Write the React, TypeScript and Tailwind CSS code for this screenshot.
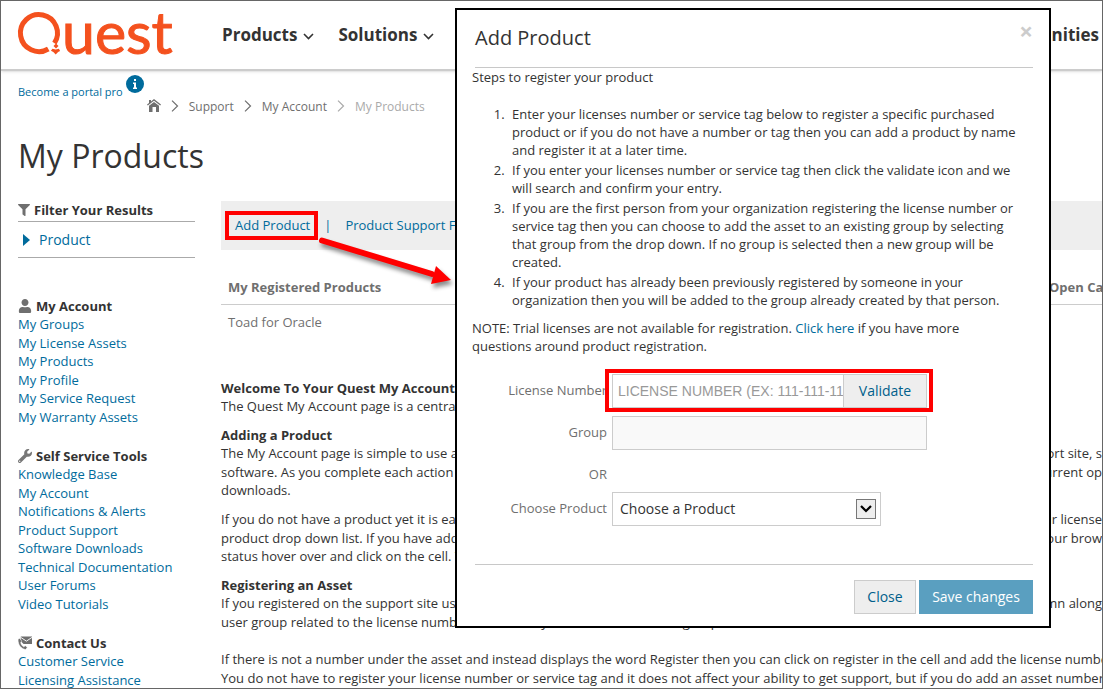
import React from 'react';
import { FaFilter, FaUser, FaWrench } from 'react-icons/fa';

const accountLinks = [
  'My Groups',
  'My License Assets',
  'My Products',
  'My Profile',
  'My Service Request',
  'My Warranty Assets',
];

const toolLinks = [
  'Knowledge Base',
  'My Account',
  'Notifications & Alerts',
  'Product Support',
  'Software Downloads',
  'Technical Documentation',
  'User Forums',
  'Video Tutorials',
];

const contactLinks = ['Customer Service', 'Licensing Assistance'];

const QuestLogo: React.FC = () => (
  <svg viewBox="0 0 158 46" className="w-[158px] h-[46px] shrink-0 overflow-visible" role="img" aria-label="Quest">
    <path d="M36.4 31.200A18.500 18.500 0 1 0 30.300 37" fill="none" stroke="#f4511e" strokeWidth="5" />
    <path d="M38 31.500l2.500 2.500L38 36.500l-2.500-2.500z" fill="#f4511e" />
    <path d="M34.500 36.800l3.200.8 3.200-.8 1.200 2.200-2 1-2.400 2.400-2.400-2.400-2.400-1.200z" fill="#f4511e" />
    <text x="44" y="42" fontFamily="Lato, sans-serif" fontSize="59" fill="#f4511e" stroke="#f4511e" strokeWidth="1">
      uest
    </text>
  </svg>
);

const HomeIcon: React.FC = () => (
  <svg viewBox="0 0 14 13" className="w-3.5 h-[13px]" fill="#6f6f6f">
    <path d="M7 0L14 5.600l-.8 1L7 1.800.8 6.600 0 5.600l2-1.600V1h2v1.400z" />
    <path d="M2 6.800l5-3.900 5 3.900V13H9V8H5.500v5H2z" />
  </svg>
);

const ContactIcon: React.FC = () => (
  <svg viewBox="0 0 15 14" className="w-3.5 h-3.5">
    <path d="M3 0h12v8H6L3 5z" fill="#6f6f6f" />
    <path d="M3 1l6 4 6-4" fill="none" stroke="#fff" />
    <path d="M0 3c0 6 3 10 8 11l2-2-2-2-2 1C4 10 3 8 3 6l1-1-2-3z" fill="#6f6f6f" stroke="#fff" strokeWidth=".6" />
  </svg>
);

const Caret: React.FC = () => (
  <svg viewBox="0 0 11 7" className="w-[11px] h-[7px] mt-0.5" fill="none" stroke="#333" strokeWidth="1.6">
    <path d="M1 1l4.500 4.500L10 1" />
  </svg>
);

const CrumbArrow: React.FC = () => (
  <svg viewBox="0 0 8 12" className="w-2 h-3 -mt-0.5" fill="none" stroke="currentColor" strokeWidth="1.2">
    <path d="M1 .6L6.500 6 1 11.400" />
  </svg>
);

const NavItem: React.FC<{ label: string }> = ({ label }) => (
  <a href="#" className="flex items-center gap-1.5 text-[17px] font-bold text-[#333]">
    {label}
    <Caret />
  </a>
);

const SideSection: React.FC<{ title: string; icon: React.ReactNode; links: string[] }> = ({ title, icon, links }) => (
  <section>
    <h2 className="flex items-center gap-1 text-[13px] leading-[18px] font-bold text-[#333]">
      {icon}
      {title}
    </h2>
    <ul>
      {links.map((link) => (
        <li key={link} className="odd:pb-px text-[13px] leading-[18px]">
          <a href="#" className="block text-[#006b9c]">{link}</a>
        </li>
      ))}
    </ul>
  </section>
);

const Line: React.FC<{ end?: string; children: React.ReactNode }> = ({ end, children }) => (
  <span className="flex justify-between odd:pb-px whitespace-nowrap">
    <span>{children}</span>
    {end && <span>{end}</span>}
  </span>
);

const ProductModal: React.FC = () => (
  <div
    role="dialog"
    aria-label="Add Product"
    className="absolute left-[454px] top-[7px] w-[596px] border-2 border-black bg-white pl-[15px] pr-4 pb-3 text-[13px] leading-[18px] text-[#333]"
  >
    <div className="flex justify-between h-[58px] ml-[3px] pt-3 border-b border-[#c8c8c8]">
      <h2 className="text-[20px] leading-[32px]">Add Product</h2>
      <button aria-label="Close dialog" className="self-start text-[24px] leading-[18px] font-bold text-[#ccc]">×</button>
    </div>
    <p>Steps to register your product</p>
    <ol className="list-decimal pl-9 pr-3 pt-[19px] flex flex-col gap-0.5">
      <li className="pl-1">
        Enter your licenses number or service tag below to register a specific purchased product or if you do not have a
        number or tag then you can add a product by name and register it at a later time.
      </li>
      <li className="pl-1">
        If you enter your licenses number or service tag then click the validate icon and we will search and confirm your
        entry.
      </li>
      <li className="pl-1">
        If you are the first person from your organization registering the license number or service tag then you can
        choose to add the asset to an existing group by selecting that group from the drop down. If no group is selected
        then a new group will be created.
      </li>
      <li className="pl-1">
        If your product has already been previously registered by someone in your organization then you will be added to
        the group already created by that person.
      </li>
    </ol>
    <p className="pt-2.5 pr-12">
      NOTE: Trial licenses are not available for registration.{' '}
      <a href="#" className="text-[#006b9c]">Click here</a> if you have more questions around product registration.
    </p>

    <form className="pt-[19px] grid grid-cols-[135px_315px] gap-x-[5px] gap-y-2 items-center text-[#6f6f6f]">
      <label htmlFor="license" className="pb-0.5 text-right">License Number</label>
      <div className="relative flex h-[34px]">
        <input
          id="license"
          placeholder="LICENSE NUMBER (EX: 111-111-111)"
          className="w-[231px] border border-r-0 border-[#ccc] pl-[5px] font-['Liberation_Sans',sans-serif] text-[14px] placeholder:text-[#999]"
        />
        <button type="button" className="flex-1 border border-[#ccc] bg-[#eee] text-[14px] text-[#005f8b]">
          Validate
        </button>
        <span className="absolute -left-[7px] -right-1.5 -top-[5px] -bottom-1 border-4 border-[#f00] pointer-events-none" />
      </div>
      <label htmlFor="group" className="pb-0.5 text-right">Group</label>
      <input id="group" className="h-[34px] border border-[#ccc] bg-[#f9f9f9] px-2" />
      <span className="text-right h-[26px] pt-[7px]">OR</span>
      <span />
      <label htmlFor="product" className="pb-0.5 text-right">Choose Product</label>
      <div className="relative w-[269px] h-[34px]">
        <select id="product" className="appearance-none w-full h-full border border-[#ccc] bg-white px-[7px] text-[14px] text-[#333]">
          <option>Choose a Product</option>
        </select>
        <span className="absolute right-[5px] top-[7px] w-5 h-5 flex items-center justify-center border border-[#777] bg-[#eee] pointer-events-none">
          <svg viewBox="0 0 12 8" className="w-3 h-2" fill="none" stroke="#000" strokeWidth="2.2">
            <path d="M1 1l5 5 5-5" />
          </svg>
        </span>
      </div>
    </form>

    <div className="mt-[38px] ml-[3px] pt-[15px] border-t border-[#c8c8c8] flex justify-end gap-[3px] text-[14px]">
      <button className="h-[34px] w-[62px] border border-[#ccc] bg-[#eee] text-[#005f8b]">Close</button>
      <button className="h-[34px] w-[114px] bg-[#5a9fc0] text-white">Save changes</button>
    </div>
  </div>
);

export default function App() {
  return (
    <div className="relative h-screen overflow-hidden border border-[#666] bg-white font-['Open_Sans','Noto_Sans',sans-serif] text-[#333]">
      <header className="flex items-center h-[70px] pl-[17px] pr-[3px] border-b-2 border-[#ccc] shadow-sm">
        <QuestLogo />
        <nav className="flex-1 flex items-center gap-6 pl-[46px]">
          <NavItem label="Products" />
          <NavItem label="Solutions" />
          <a href="#" className="ml-auto text-[17px] font-bold">Communities</a>
        </nav>
      </header>

      <div className="flex pl-[17px] pt-1">
        <a href="#" className="pt-2 text-[11px] leading-[18px] text-[#006b9c]">Become a portal pro</a>
        <span className="ml-[3px] w-[18px] h-[18px] rounded-full bg-[#006b9c] flex items-center justify-center">
          <svg viewBox="0 0 6 10" className="w-1.5 h-2.5" fill="#fff">
            <path d="M2 0h2v2H2zM1 3.500h3V8.500h1V10H1V8.500h1V5H1z" />
          </svg>
        </span>
        <nav className="pt-[23px] ml-[3px] flex items-center gap-2.5 text-[12px] leading-[18px] text-[#6f6f6f]">
          <a href="#" aria-label="Home" className="-mt-1"><HomeIcon /></a>
          <CrumbArrow />
          <a href="#">Support</a>
          <CrumbArrow />
          <a href="#">My Account</a>
          <span className="flex items-center gap-2.5 text-[#aaa]">
            <CrumbArrow />
            My Products
          </span>
        </nav>
      </div>

      <h1 className="pl-[17px] pt-5 text-[32px] leading-[40px]">My Products</h1>

      <div className="flex gap-[26px] pl-[17px] pt-[25px]">
        <aside className="w-[177px] shrink-0">
          <h2 className="flex items-center gap-1 border-b border-[#aaa] pb-0.5 text-[13px] leading-[18px] font-bold">
            <FaFilter className="w-3 h-3 text-[#6f6f6f]" />
            Filter Your Results
          </h2>
          <a href="#" className="flex items-center gap-2 h-9 pl-[5px] border-b border-[#aaa] text-[14px] text-[#006b9c]">
            <svg viewBox="0 0 8 12" className="w-2 h-3" fill="#006b9c">
              <path d="M0 0l7 6-7 6z" />
            </svg>
            Product
          </a>
          <div className="pt-[39px] flex flex-col gap-[21px]">
            <SideSection title="My Account" icon={<FaUser className="w-3.5 h-3.5 text-[#6f6f6f]" />} links={accountLinks} />
            <SideSection title="Self Service Tools" icon={<FaWrench className="w-3.5 h-3.5 text-[#777]" />} links={toolLinks} />
            <SideSection title="Contact Us" icon={<ContactIcon />} links={contactLinks} />
          </div>
        </aside>

        <main className="flex-1 min-w-0 text-[13px] leading-[18px]">
          <div className="flex items-center gap-3.5 h-[49px] pb-0.5 pl-3.5 bg-[#eee] text-[#006b9c]">
            <div className="relative">
              <a href="#">Add Product</a>
              <span className="absolute -left-2.5 -right-2 -top-[5px] -bottom-1.5 border-4 border-[#f00] pointer-events-none" />
              {/* arrow leading from the link to the dialog */}
              <svg
                viewBox="0 0 140 55"
                className="absolute left-[79px] top-[18px] w-[140px] h-[55px] pointer-events-none drop-shadow-[2px_4px_2px_rgba(0,0,0,0.45)]"
              >
                <path d="M8 6.500L118 40" stroke="#f00" strokeWidth="6" strokeLinecap="round" />
                <path d="M122 32l15 14-20 4z" fill="#f00" />
              </svg>
            </div>
            <span>|</span>
            <a href="#">Product Support FAQ</a>
          </div>

          <table className="w-full table-fixed mt-7 text-left text-[#6f6f6f]">
            <thead>
              <tr className="border-b border-[#ccc]">
                <th className="pl-[7px] pb-2 font-bold">My Registered Products</th>
                <th className="w-[53px] pb-2 font-bold whitespace-nowrap">Open Cases</th>
              </tr>
            </thead>
            <tbody>
              <tr>
                <td className="pl-[7px] pt-2">Toad for Oracle</td>
                <td />
              </tr>
            </tbody>
          </table>

          <div className="pt-12 flex flex-col gap-2.5">
            <section>
              <h3 className="font-bold">Welcome To Your Quest My Account</h3>
              <p><Line>The Quest My Account page is a central place for all of your products.</Line></p>
            </section>
            <section>
              <h3 className="font-bold">Adding a Product</h3>
              <p>
                <Line end="support site, s">The My Account page is simple to use and lets you manage your products from the</Line>
                <Line end="current op">software. As you complete each action you will see your status, service requests and</Line>
                <Line>downloads.</Line>
              </p>
            </section>
            <p>
              <Line end="your license">If you do not have a product yet it is easy to add one. Click Add Product and enter</Line>
              <Line end="your brow">product drop down list. If you have added a product and want to view or change</Line>
              <Line>status hover over and click on the cell. Then select the action.</Line>
            </p>
            <section>
              <h3 className="font-bold">Registering an Asset</h3>
              <p>
                <Line end="column along">If you registered on the support site using a license number or service tag</Line>
                <Line>user group related to the license number and added you to the related user group.</Line>
              </p>
            </section>
            <p className="pt-[9px]">
              <Line>
                If there is not a number under the asset and instead displays the word Register then you can click on
                register in the cell and add the license number
              </Line>
              <Line>
                You do not have to register your license number or service tag and it does not affect your ability to get
                support, but if you do add an asset number
              </Line>
            </p>
          </div>
        </main>
      </div>

      <ProductModal />
    </div>
  );
}
